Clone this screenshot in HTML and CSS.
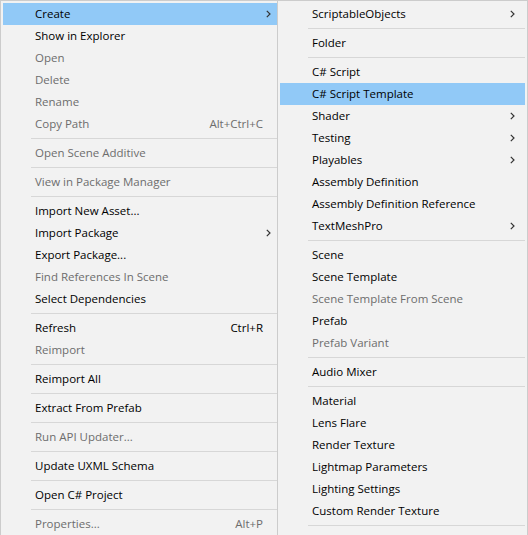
FILE: index.html
```html
<!DOCTYPE html>
<html>
<head>
<meta charset="utf-8">
<link rel="stylesheet" href="styles.css">
</head>
<body>
<div class="screen">
  <div class="menu menu-main">
    <div class="item hl"><span class="label">Create</span><span class="arrow"><svg width="5" height="8" viewBox="0 0 5 8"><polyline points="0.8,0.8 4,4 0.8,7.2" fill="none" stroke="#333" stroke-width="1.2"/></svg></span></div>
    <div class="item"><span class="label">Show in Explorer</span><span class="arrow"></span></div>
    <div class="item off"><span class="label">Open</span><span class="arrow"></span></div>
    <div class="item off"><span class="label">Delete</span><span class="arrow"></span></div>
    <div class="item off"><span class="label">Rename</span><span class="arrow"></span></div>
    <div class="item off"><span class="label">Copy Path</span><span class="key">Alt+Ctrl+C</span><span class="arrow"></span></div>
    <div class="sep"></div>
    <div class="item off"><span class="label">Open Scene Additive</span><span class="arrow"></span></div>
    <div class="sep"></div>
    <div class="item off"><span class="label">View in Package Manager</span><span class="arrow"></span></div>
    <div class="sep"></div>
    <div class="item"><span class="label">Import New Asset...</span><span class="arrow"></span></div>
    <div class="item"><span class="label">Import Package</span><span class="arrow"><svg width="5" height="8" viewBox="0 0 5 8"><polyline points="0.8,0.8 4,4 0.8,7.2" fill="none" stroke="#333" stroke-width="1.2"/></svg></span></div>
    <div class="item"><span class="label">Export Package...</span><span class="arrow"></span></div>
    <div class="item off"><span class="label">Find References In Scene</span><span class="arrow"></span></div>
    <div class="item"><span class="label">Select Dependencies</span><span class="arrow"></span></div>
    <div class="sep"></div>
    <div class="item"><span class="label">Refresh</span><span class="key">Ctrl+R</span><span class="arrow"></span></div>
    <div class="item off"><span class="label">Reimport</span><span class="arrow"></span></div>
    <div class="sep"></div>
    <div class="item"><span class="label">Reimport All</span><span class="arrow"></span></div>
    <div class="sep"></div>
    <div class="item"><span class="label">Extract From Prefab</span><span class="arrow"></span></div>
    <div class="sep"></div>
    <div class="item off"><span class="label">Run API Updater...</span><span class="arrow"></span></div>
    <div class="sep"></div>
    <div class="item"><span class="label">Update UXML Schema</span><span class="arrow"></span></div>
    <div class="sep"></div>
    <div class="item"><span class="label">Open C# Project</span><span class="arrow"></span></div>
    <div class="sep"></div>
    <div class="item off"><span class="label">Properties...</span><span class="key">Alt+P</span><span class="arrow"></span></div>
  </div>
  <div class="menu menu-sub">
    <div class="item"><span class="label">ScriptableObjects</span><span class="arrow"><svg width="5" height="8" viewBox="0 0 5 8"><polyline points="0.8,0.8 4,4 0.8,7.2" fill="none" stroke="#333" stroke-width="1.2"/></svg></span></div>
    <div class="sep"></div>
    <div class="item"><span class="label">Folder</span><span class="arrow"></span></div>
    <div class="sep"></div>
    <div class="item"><span class="label">C# Script</span><span class="arrow"></span></div>
    <div class="item hl"><span class="label">C# Script Template</span><span class="arrow"></span></div>
    <div class="item"><span class="label">Shader</span><span class="arrow"><svg width="5" height="8" viewBox="0 0 5 8"><polyline points="0.8,0.8 4,4 0.8,7.2" fill="none" stroke="#333" stroke-width="1.2"/></svg></span></div>
    <div class="item"><span class="label">Testing</span><span class="arrow"><svg width="5" height="8" viewBox="0 0 5 8"><polyline points="0.8,0.8 4,4 0.8,7.2" fill="none" stroke="#333" stroke-width="1.2"/></svg></span></div>
    <div class="item"><span class="label">Playables</span><span class="arrow"><svg width="5" height="8" viewBox="0 0 5 8"><polyline points="0.8,0.8 4,4 0.8,7.2" fill="none" stroke="#333" stroke-width="1.2"/></svg></span></div>
    <div class="item"><span class="label">Assembly Definition</span><span class="arrow"></span></div>
    <div class="item"><span class="label">Assembly Definition Reference</span><span class="arrow"></span></div>
    <div class="item"><span class="label">TextMeshPro</span><span class="arrow"><svg width="5" height="8" viewBox="0 0 5 8"><polyline points="0.8,0.8 4,4 0.8,7.2" fill="none" stroke="#333" stroke-width="1.2"/></svg></span></div>
    <div class="sep"></div>
    <div class="item"><span class="label">Scene</span><span class="arrow"></span></div>
    <div class="item"><span class="label">Scene Template</span><span class="arrow"></span></div>
    <div class="item off"><span class="label">Scene Template From Scene</span><span class="arrow"></span></div>
    <div class="item"><span class="label">Prefab</span><span class="arrow"></span></div>
    <div class="item off"><span class="label">Prefab Variant</span><span class="arrow"></span></div>
    <div class="sep"></div>
    <div class="item"><span class="label">Audio Mixer</span><span class="arrow"></span></div>
    <div class="sep"></div>
    <div class="item"><span class="label">Material</span><span class="arrow"></span></div>
    <div class="item"><span class="label">Lens Flare</span><span class="arrow"></span></div>
    <div class="item"><span class="label">Render Texture</span><span class="arrow"></span></div>
    <div class="item"><span class="label">Lightmap Parameters</span><span class="arrow"></span></div>
    <div class="item"><span class="label">Lighting Settings</span><span class="arrow"></span></div>
    <div class="item"><span class="label">Custom Render Texture</span><span class="arrow"></span></div>
    <div class="sep"></div>
    <div class="item"></div>
  </div>
</div>
</body>
</html>
```

FILE: styles.css
```css
html, body {
  margin: 0;
  padding: 0;
  background: #f2f2f2;
  overflow: hidden;
}

.screen {
  display: flex;
  align-items: flex-start;
  width: 528px;
  height: 535px;
  overflow: hidden;
  font-family: "Open Sans", "Noto Sans", sans-serif;
  font-size: 11.5px;
  color: #000;
}

.menu {
  background: #f2f2f2;
  border: 1px solid #cccccc;
  padding: 2px;
  flex: none;
}

.menu-main {
  width: 274px;
  border-right: none;
  padding-right: 0;
}

.menu-sub {
  width: 245px;
}

.item {
  box-sizing: border-box;
  display: flex;
  align-items: center;
  height: 22px;
  padding: 0 6px 2px 32px;
  white-space: nowrap;
}

.menu-sub .item {
  padding-right: 10px;
}

.item.hl {
  background: #91c9f7;
}

.item.off {
  color: #6d6d6d;
}

.label {
  flex: 1;
}

.key {
  flex: none;
}

.arrow {
  flex: none;
  width: 8px;
  display: flex;
  justify-content: flex-end;
  align-items: center;
  padding-top: 2px;
}

.arrow svg {
  display: block;
}

.sep {
  height: 1px;
  background: #d7d7d7;
  margin: 3px 0 3px 28px;
}
```
